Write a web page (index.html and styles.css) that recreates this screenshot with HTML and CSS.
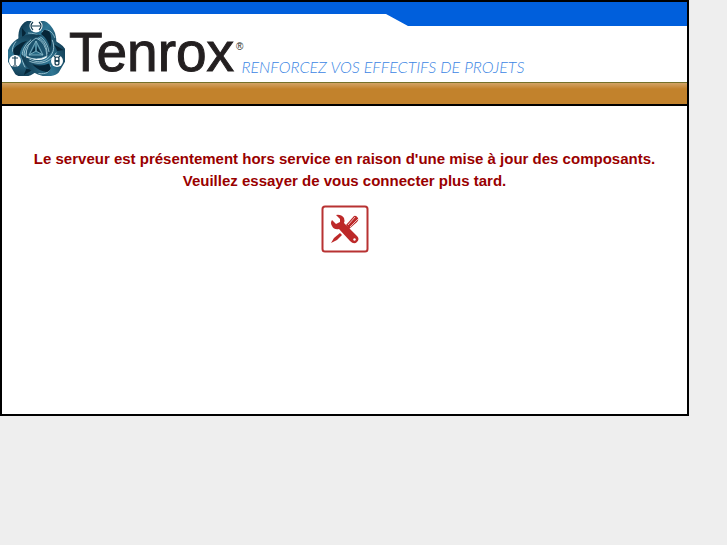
FILE: index.html
```html
<!DOCTYPE html>
<html lang="fr">
<head>
<meta charset="utf-8">
<title>Tenrox</title>
<link rel="stylesheet" href="styles.css">
</head>
<body>
<div class="panel">
  <header class="header">
    <div class="stripe"></div>
    <div class="brand">
      <svg class="emblem" viewBox="0 0 57 56" aria-hidden="true">
        <defs>
          <linearGradient id="blade" x1="0" y1="0" x2="1" y2="1">
            <stop offset="0" stop-color="#0b3046"/>
            <stop offset=".45" stop-color="#2f7694"/>
            <stop offset="1" stop-color="#082a3e"/>
          </linearGradient>
          <g id="arm">
            <path d="M19 1C12 4 9 12 11 23C16 18 20 17 25 18C32 19 37 24 38 33C40 37 40 41 38 44C46 38 51 26 47 13C44 6 40 2 36 1Z" fill="url(#blade)"/>
            <path d="M11 23C16 17 21 15 28 17C35 19 39 25 39 34M20 13C30 13 39 19 41 32M34 12C40 8 44 11 47 18" fill="none" stroke="#a5cbd8" stroke-width=".8"/>
            <path d="M14 8L18 13L14 19ZM36 10Q42 9 43 16Q44 23 42 28Q40 19 33 14Z" fill="#062638"/>
          </g>
        </defs>
        <use href="#arm"/>
        <use href="#arm" transform="rotate(240 28.5 31)"/>
        <use href="#arm" transform="rotate(120 28.5 31)"/>
        <path d="M28 18Q38 22 39 36Q28 42 18 36Q18 24 28 18Z" fill="#1b536e" stroke="#a5cbd8" stroke-width=".8"/>
        <path d="M28 21L21 35H35Z" fill="#276984" stroke="#8bbdcb" stroke-width=".8"/>
        <path d="M28 21V31L21 35M28 31L35 35" fill="none" stroke="#8bbdcb" stroke-width=".8"/>
        <path d="M23 33L27 26V31ZM29 26L33 33L29 31Z" fill="#082f46"/>
        <circle cx="28" cy="6" r="6.500" fill="#fff"/>
        <circle cx="7" cy="41" r="6" fill="#fff"/>
        <circle cx="49" cy="41" r="6" fill="#fff"/>
        <g fill="none" stroke="#143c50" stroke-width="1.200">
          <path d="M25 2Q21 6 25 10M31 2Q35 6 31 10M24 6H32"/>
          <path d="M7 36V45M4 38H10M5 46H9"/>
          <circle cx="49" cy="39" r="2"/>
          <circle cx="49" cy="43" r="2"/>
          <path d="M46 36L48 38M52 36L50 38M46 41H52"/>
        </g>
      </svg>
      <span class="name">Tenrox</span>
      <span class="mark">®</span>
      <span class="tagline">RENFORCEZ VOS EFFECTIFS DE PROJETS</span>
    </div>
    <div class="band"></div>
  </header>
  <main class="notice">
    <p class="message">Le serveur est présentement hors service en raison d'une mise à jour des composants.<br>Veuillez essayer de vous connecter plus tard.</p>
    <svg class="tools" viewBox="0 0 48 48" aria-hidden="true">
      <rect x="1.500" y="1.500" width="45" height="45" rx="2.500" fill="#fff" stroke="#b83232" stroke-width="2"/>
      <path d="M10 38L13 33L19 28L21 30L16 35Z" fill="#bd2929"/>
      <path d="M25 20L33 11Q35 10 37 13Q38 15 36 17L28 24Z" fill="#bd2929"/>
      <path d="M27 20L34 12M29 22L37 14" stroke="#fff" stroke-width=".7"/>
      <path d="M15 10Q20 9 23 13Q24 16 23 18L36 31Q39 34 36 37Q33 40 29 36L18 24Q13 25 11 21Q9 18 11 15L15 19L19 17V14Z" fill="#bd2929"/>
      <circle cx="33.500" cy="34.500" r="1.200" fill="#fff"/>
    </svg>
  </main>
</div>
</body>
</html>
```
FILE: styles.css
```css
body {
  margin: 0;
  background: #eee;
  font-family: "Liberation Sans", Arial, sans-serif;
}

.panel {
  margin-right: 38px;
  border: 2px solid #000;
  background: #fff;
}

.stripe {
  height: 24px;
  background: #005fdc;
  clip-path: polygon(0 0, 100% 0, 100% 100%, 406px 100%, 384px 50%, 0 50%);
}

.brand {
  display: flex;
  height: 56px;
  padding-left: 6px;
  color: #231f20;
}

.emblem {
  flex: none;
  width: 57px;
  height: 56px;
  margin-top: -6px;
}

.name {
  margin: -4px 0 0 4px;
  font-size: 55px;
  line-height: 60px;
  -webkit-text-stroke: 1px #231f20;
}

.mark {
  margin: 15px 0 0 2px;
  font-size: 10px;
  line-height: 12px;
}

.tagline {
  margin: 31px 0 0 -2px;
  color: #3c86e4;
  font: italic 300 16px/20px Lato, sans-serif;
  white-space: nowrap;
}

.band {
  height: 21px;
  border-top: 1px solid #74702a;
  border-bottom: 2px solid #000;
  background: linear-gradient(#d2a366, #c2822c 6px);
}

.notice {
  min-height: 266px;
  padding: 42px 16px 0;
  text-align: center;
}

.message {
  margin: 0 0 13px;
  color: #990000;
  font-size: 15px;
  font-weight: bold;
  line-height: 22px;
}

.tools {
  width: 48px;
  height: 48px;
}
```
